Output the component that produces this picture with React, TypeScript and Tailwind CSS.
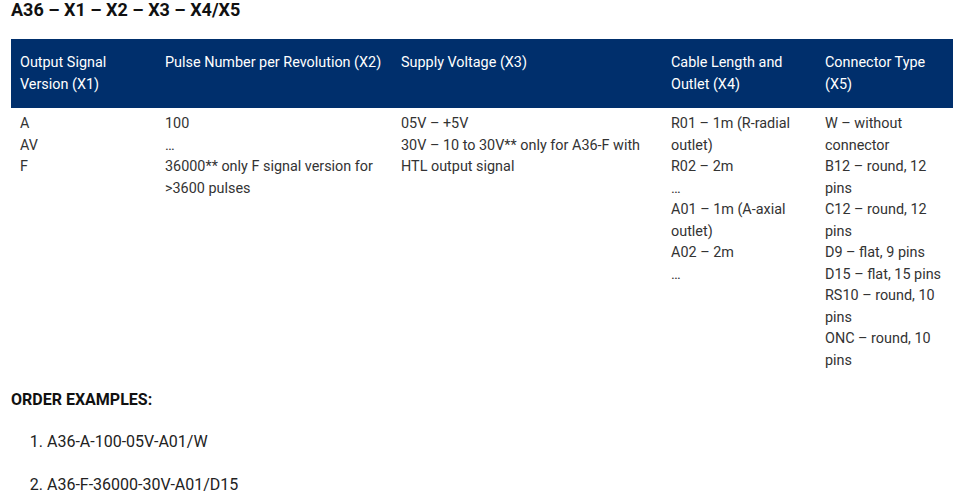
const head = [
  "Output Signal Version (X1)",
  "Pulse Number per Revolution (X2)",
  "Supply Voltage (X3)",
  "Cable Length and Outlet (X4)",
  "Connector Type (X5)",
];

const body = [
  ["A", "AV", "F"],
  ["100", "…", "36000** only F signal version for >3600 pulses"],
  ["05V – +5V", "30V – 10 to 30V** only for A36-F with HTL output signal"],
  ["R01 – 1m (R-radial outlet)", "R02 – 2m", "…", "A01 – 1m (A-axial outlet)", "A02 – 2m", "…"],
  [
    "W – without connector",
    "B12 – round, 12 pins",
    "C12 – round, 12 pins",
    "D9 – flat, 9 pins",
    "D15 – flat, 15 pins",
    "RS10 – round, 10 pins",
    "ONC – round, 10 pins",
  ],
];

const widths = ["w-[145px]", "w-[236px]", "w-[270px]", "w-[154px]", "w-[137px]"];

export default function App() {
  return (
    <div className="w-[960px] h-[495px] overflow-hidden bg-white font-['Roboto',sans-serif] text-[#333]">
      <div className="px-[11px]">
        <h2 className="text-[18px] leading-[20px] font-bold text-[#111]">A36 – X1 – X2 – X3 – X4/X5</h2>

        <table className="mt-[19px] w-[942px] table-fixed border-collapse text-[14.4px] leading-[21.5px]">
          <thead>
            <tr className="bg-[#002f6c] text-white">
              {head.map((h, i) => (
                <th key={h} className={`${widths[i]} px-[9px] pt-[13px] pb-[13px] text-left align-top font-normal`}>
                  {h}
                </th>
              ))}
            </tr>
          </thead>
          <tbody>
            <tr>
              {body.map((lines, i) => (
                <td key={i} className="px-[9px] pt-[5px] pb-[3px] align-top">
                  {lines.map((l) => (
                    <div key={l}>{l}</div>
                  ))}
                </td>
              ))}
            </tr>
          </tbody>
        </table>

        <p className="mt-[16px] text-[16px] leading-[20px] font-bold text-[#111]">ORDER EXAMPLES:</p>

        <ol className="mt-[21px] list-decimal pl-[36px] text-[16px] leading-[22px] text-[#222]">
          <li className="mb-[21px]">A36-A-100-05V-A01/W</li>
          <li>A36-F-36000-30V-A01/D15</li>
        </ol>
      </div>
    </div>
  );
}
